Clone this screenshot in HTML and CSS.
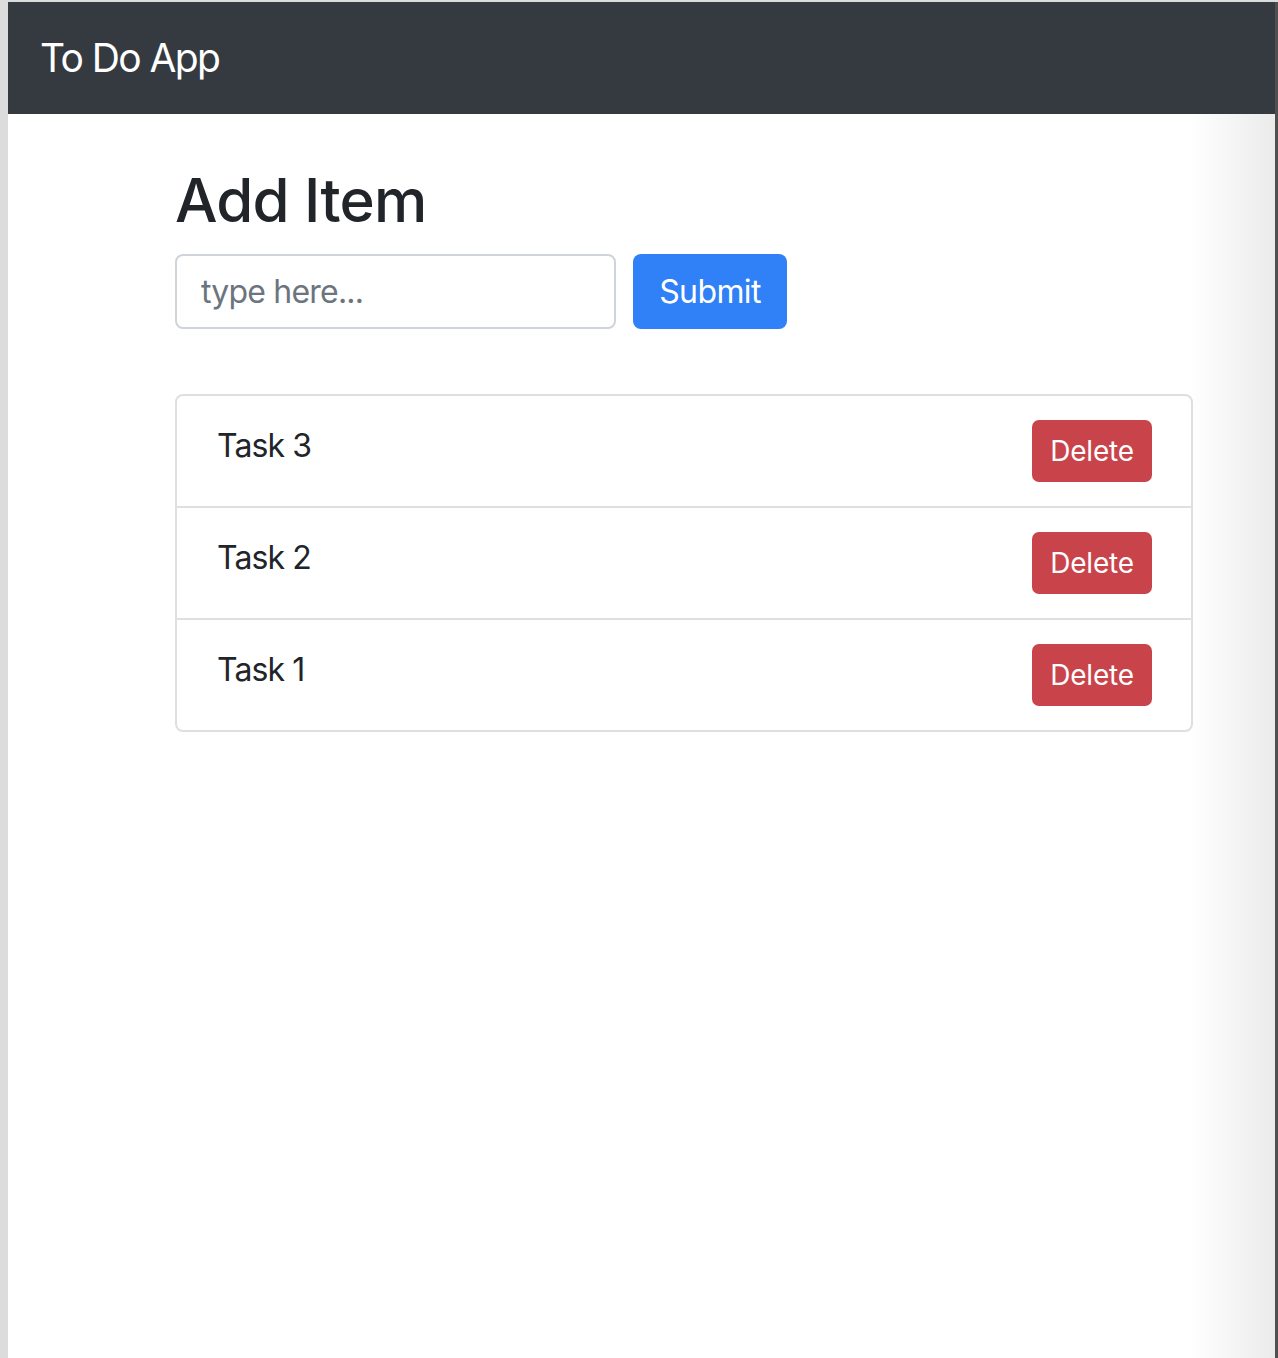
FILE: index.html
```html
<!DOCTYPE html>
<html lang="en">
<head>
<meta charset="utf-8">
<title>To Do App</title>
<link rel="stylesheet" href="styles.css">
</head>
<body>
<div class="frame">
  <nav class="navbar">
    <span class="brand">To Do App</span>
  </nav>
  <main class="page">
    <div class="container">
      <h1 class="title">Add Item</h1>
      <form class="add-form">
        <input class="field" type="text" placeholder="type here...">
        <button class="btn btn-primary" type="button">Submit</button>
      </form>
      <ul class="list">
        <li class="item"><span class="item-text">Task 3</span><button class="btn-del" type="button">Delete</button></li>
        <li class="item"><span class="item-text">Task 2</span><button class="btn-del" type="button">Delete</button></li>
        <li class="item"><span class="item-text">Task 1</span><button class="btn-del" type="button">Delete</button></li>
      </ul>
    </div>
  </main>
</div>
</body>
</html>
```
FILE: styles.css
```css
* { box-sizing: border-box; }
html, body { margin: 0; padding: 0; }
body {
  background: #dcdcdc;
  padding: 2px 0 0 8px;
  font-family: Inter, "Liberation Sans", sans-serif;
  color: #212529;
  height: 1358px;
  overflow: hidden;
}
.frame {
  height: 1356px;
  border-right: 3px solid #505050;
  display: flex;
  flex-direction: column;
  background: #fff;
}
.navbar {
  height: 112px;
  background: #343a40;
  display: flex;
  align-items: center;
  padding-left: 32px;
  flex: none;
}
.brand {
  color: #fff;
  font-size: 39px;
  line-height: 60px;
  font-weight: 400;
  letter-spacing: -1.6px;
  margin-top: -1px;
}
.page {
  flex: 1;
  background: linear-gradient(to right, #fff calc(100% - 85px), #ebebeb 100%);
}
.container {
  margin-left: 167px;
  width: 1018px;
  padding-top: 50px;
}
.title {
  margin: 0 0 18px;
  font-size: 60px;
  line-height: 72px;
  font-weight: 500;
  letter-spacing: -0.8px;
}
.add-form {
  display: flex;
  gap: 17px;
  margin: 0 0 65px;
}
.field {
  width: 441px;
  height: 75px;
  border: 2px solid #ced4da;
  border-radius: 8px;
  padding: 0 24px;
  font-family: inherit;
  font-size: 32px;
  letter-spacing: -0.8px;
  color: #495057;
  outline: none;
}
.field::placeholder { color: #6c757d; }
.btn {
  height: 75px;
  border: none;
  border-radius: 8px;
  padding: 0;
  font-family: inherit;
  font-size: 32px;
  letter-spacing: -0.6px;
  color: #fff;
}
.btn-primary { background: #3080f7; width: 154px; }
.list {
  list-style: none;
  margin: 0;
  padding: 0;
  border: 2px solid #dfdfdf;
  border-radius: 8px;
}
.item {
  display: flex;
  justify-content: space-between;
  align-items: flex-start;
  padding: 24px 39px 24px 40px;
}
.item + .item { border-top: 2px solid #dfdfdf; }
.item-text {
  font-size: 32px;
  line-height: 48px;
  letter-spacing: -0.9px;
  margin-top: 2px;
}
.btn-del {
  width: 120px;
  height: 62px;
  border: none;
  border-radius: 7px;
  background: #c9434a;
  color: #fff;
  font-family: inherit;
  font-size: 28px;
  letter-spacing: -0.2px;
  padding: 0;
}
```
